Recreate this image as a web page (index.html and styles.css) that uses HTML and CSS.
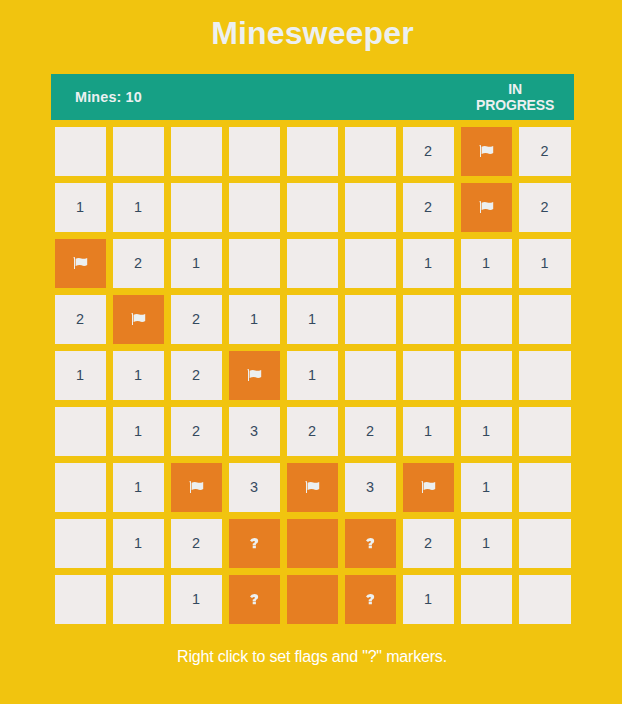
FILE: index.html
```html
<!DOCTYPE html>
<html lang="en">
<head>
<meta charset="utf-8">
<title>Minesweeper</title>
<link rel="stylesheet" href="styles.css">
</head>
<body>
<h1>Minesweeper</h1>
<main class="game">
<header class="status"><div class="mines">Mines: 10</div><div class="state">IN PROGRESS</div></header>
<div class="board" id="board"></div>
</main>
<p class="hint">Right click to set flags and "?" markers.</p>
<script src="board.js"></script>
</body>
</html>
```
FILE: styles.css
```css
* { box-sizing: border-box; }
body {
  margin: 0;
  background: #f1c40f;
  color: #ecf0f1;
  font-family: "Liberation Sans", Arial, sans-serif;
}
h1 { margin: 0; padding-top: 15px; height: 74px; font-size: 32px; line-height: 37px; text-align: center; padding-left: 3px; letter-spacing: 0.15px; }
.game { width: 523px; margin-left: 51px; }
.status {
  display: flex;
  align-items: center;
  justify-content: space-between;
  height: 46px;
  padding: 0 20px 0 24px;
  background: #16a085;
  font-size: 14px;
  font-weight: bold;
  line-height: 16px;
}
.mines { font-size: 14.4px; letter-spacing: 0.15px; }
.state { width: 78px; text-align: center; letter-spacing: -0.15px; }
.board {
  display: grid;
  grid-template-columns: repeat(8, 51px) 52px;
  grid-auto-rows: 49px;
  gap: 7px;
  padding: 7px 3px 0 4px;
}
.cell {
  display: flex;
  align-items: center;
  justify-content: center;
  padding: 0 1px 1px 0;
  background: #f0eceb;
  color: #34495e;
  font-size: 14.4px;
  line-height: 16px;
}
.covered { background: #e67e22; color: #ecf0f1; }
.icon { display: block; width: 14px; height: 14px; fill: #ecf0f1; }
.icon.flag { width: 15px; }
.hint { margin: 0; padding-top: 24px; text-align: center; font-size: 16px; line-height: 18px; color: #fff; padding-left: 2px; letter-spacing: -0.18px; }
```
FILE: board.js
```js
const rows = [
  "      2F2",
  "11    2F2",
  "F21   111",
  "2F211    ",
  "112F1    ",
  " 1232211 ",
  " 1F3F3F1 ",
  " 12?#?21 ",
  "  1?#?1  "
];
const icons = {
  F: '<svg class="icon flag" viewBox="0 0 15 14"><path d="M.4 1.500Q.4 1 1.200 1T2 1.500V13H1V2.600Q.4 2.200 .4 1.500M2.600 2.800Q5.500 1.200 8.300 2.500Q10.500 3.400 14.200 2V9Q11.500 10.600 8.500 9.300Q6 8.300 2.600 10.100Z"/></svg>',
  "?": '<svg class="icon" viewBox="0 0 14 14"><path d="M3 4.500Q4.200 2 7.300 2Q11.200 2 11.200 5Q11.200 7 8.900 8V9H5.700V7.800Q8 6.800 8 5.500Q7 4.300 5 6ZM5.700 9.600H8.900V12.200H5.700Z"/></svg>'
};
const board = document.getElementById("board");
for (const row of rows) {
  for (const mark of row) {
    const cell = document.createElement("div");
    cell.className = "F?#".includes(mark) ? "cell covered" : "cell";
    cell.innerHTML = icons[mark] || (mark === "#" ? "" : mark.trim());
    board.append(cell);
  }
}
```
